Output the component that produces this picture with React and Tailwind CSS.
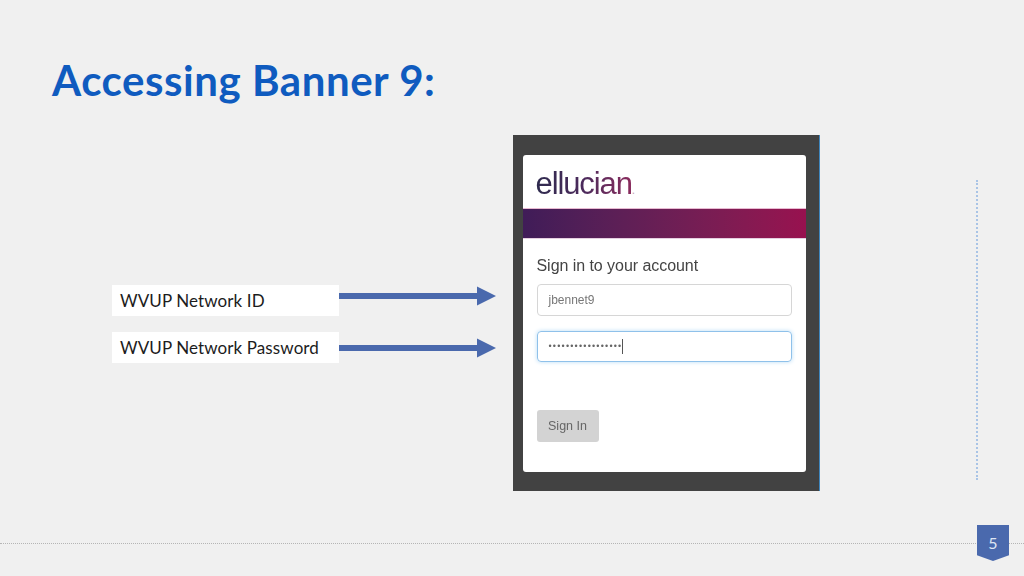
function Arrow({ className }) {
    return (
        <svg width="157" height="20" viewBox="0 0 157 20" className={`block ${className}`}>
            <path d="M0 7 H138 V0.5 L157 10 L138 19.5 V13 H0 Z" fill="#4a69ad" />
        </svg>
    )
}

function Label({ text, className, arrowClass }) {
    return (
        <div className={`flex items-center ${className}`}>
            <div className="w-[227px] h-[31px] bg-white pl-2 flex items-center text-[17px] text-[#1c1c1c] font-['Lato',sans-serif] tracking-[0.1px]">
                {text}
            </div>
            <Arrow className={arrowClass} />
        </div>
    )
}

function LoginShot() {
    return (
        <div className="w-[307px] h-[356px] bg-[#424242] border-r border-r-[#3f86bd] pt-5 pl-[9.5px] font-['Liberation_Sans',sans-serif]">
            <div className="w-[283px] h-[317px] bg-white rounded-[3px] overflow-hidden">
                <div className="h-[54px] pl-[13px] pt-[8px] border-b border-b-[#e8b9d2]">
                    <span className="text-[31px] leading-[42px] tracking-[-1.1px] text-transparent bg-clip-text bg-gradient-to-r from-[#2e2a4e] via-[#4c2a5c] to-[#8a2a5c] blur-[0.3px]">
                        ellucian
                    </span>
                    <span className="text-[12px] text-[#c9a3b8]">.</span>
                </div>
                <div className="h-[30px] bg-gradient-to-r from-[#401c58] to-[#98114f] border-b border-b-[#e5cfe0]" />
                <div className="px-[14px] pt-[17px] blur-[0.3px]">
                    <div className="text-[16px] leading-[19px] text-[#444] tracking-[-0.05px]">Sign in to your account</div>
                    <div className="mt-[9px] w-[255px] h-[32px] border border-[#d6d6d6] rounded-[4px] pl-[11px] flex items-center text-[12px] text-[#777]">
                        jbennet9
                    </div>
                    <div className="mt-[15px] w-[255px] h-[31px] border border-[#8fc1ea] rounded-[4px] pl-[11px] flex items-center shadow-[0_0_4px_#b9dcf5]">
                        <span className="text-[9px] text-[#666] tracking-[1.2px] leading-none">•••••••••••••••••</span>
                        <span className="w-px h-[15px] bg-[#555]" />
                    </div>
                    <div className="mt-[48px] w-[62px] h-[32px] bg-[#d3d3d3] rounded-[3px] flex items-center justify-center text-[12.5px] text-[#666]">
                        Sign In
                    </div>
                </div>
            </div>
        </div>
    )
}

export default function App() {
    return (
        <div className="relative w-[1024px] h-[576px] overflow-hidden bg-[#f0f0f0]">
            {/* Title */}
            <h1 className="pl-[52px] pt-[52px] text-[42px] leading-[56px] font-bold text-[#0f5bbf] font-['Lato',sans-serif] tracking-[0.55px]">
                Accessing Banner 9:
            </h1>

            {/* Slide body */}
            <div className="flex mt-[27px] pl-[112px]">
                <div className="w-[401px] pt-[150px]">
                    <Label text="WVUP Network ID" arrowClass="-mt-[10px]" />
                    <Label text="WVUP Network Password" className="mt-[16px]" />
                </div>
                <LoginShot />
            </div>

            {/* Decor lines */}
            <div className="absolute left-[976px] top-[180px] h-[300px] border-l-2 border-dotted border-l-[#a9c4e6]" />
            <div className="absolute left-0 right-0 top-[543px] border-t border-dotted border-t-[#b5b5b5]" />

            {/* Page number */}
            <div className="absolute left-[977px] top-[525px] w-[32px] h-[36px] bg-[#4a69ad] [clip-path:polygon(0_0,100%_0,100%_84%,50%_100%,0_84%)] flex items-center justify-center text-[16px] text-[#dfe6f3] font-['Lato',sans-serif]">
                5
            </div>
        </div>
    )
}
